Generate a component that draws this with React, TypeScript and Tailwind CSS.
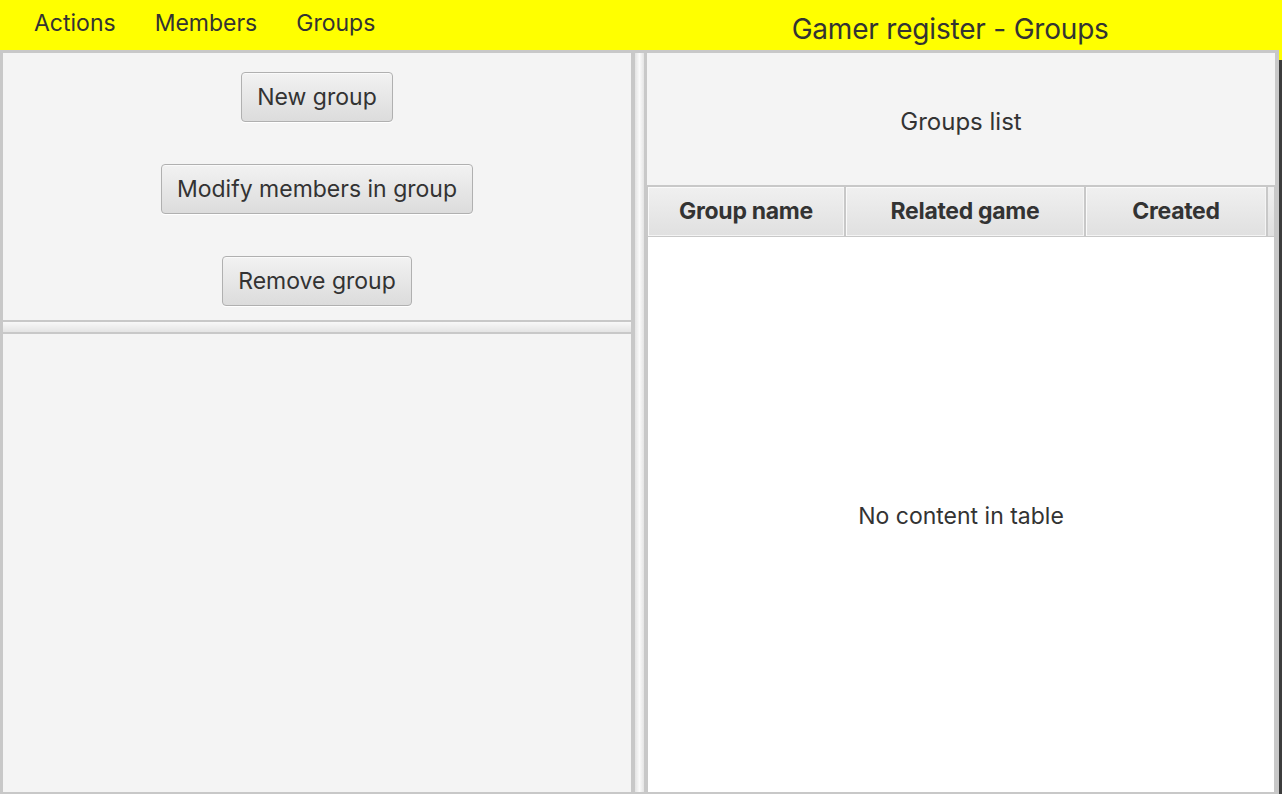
import React from "react";

function Btn({ label }: { label: string }) {
  return (
    <button className="h-[50px] px-[15px] rounded-[4px] border border-[#b0b0b0] bg-gradient-to-b from-[#f2f2f2] to-[#dcdcdc] shadow-[inset_0_1px_0_#fafafa,0_1px_0_#ffffff] text-[23px] text-[#333333] leading-none">
      {label}
    </button>
  );
}

function HeadCell({ label, w }: { label: string; w: string }) {
  return (
    <div className={`${w} h-full flex items-center justify-center border-r-2 border-[#c8c8c8] bg-gradient-to-b from-[#f0f0f0] to-[#e0e0e0] shadow-[inset_1px_1px_0_#fafafa,inset_-1px_-1px_0_#f4f4f4] text-[23px] font-bold text-[#333333] tracking-[-0.3px]`}>
      {label}
    </div>
  );
}

export default function App() {
  return (
    <div
      className="w-[1282px] h-[794px] flex overflow-hidden bg-[#f4f4f4] text-[#333333]"
      style={{ fontFamily: "Inter, 'Noto Sans', sans-serif" }}
    >
      <div className="w-[1279px] flex flex-col">
        <header className="h-[50px] bg-[#ffff00] flex items-center">
          <nav className="flex items-center pl-[34px] gap-[39px] text-[23px] -mt-[4px]">
            <span>Actions</span>
            <span>Members</span>
            <span>Groups</span>
          </nav>
          <div className="flex-1 flex justify-center pl-[246px] text-[28px] mt-[8px] tracking-[-0.2px]">
            Gamer register - Groups
          </div>
        </header>
        <div className="flex-1 flex bg-[#c8c8c8] pt-[3px] pb-[2px] pl-[3px] pr-[4px]">
          {/* left pane */}
          <div className="w-[628px] flex flex-col">
            <div className="h-[267px] bg-[#f4f4f4] flex flex-col items-center pt-[19px] gap-[42px]">
              <Btn label="New group" />
              <Btn label="Modify members in group" />
              <Btn label="Remove group" />
            </div>
            <div className="h-[14px] border-y-2 border-[#c8c8c8] bg-gradient-to-b from-[#f8f8f8] to-[#e4e4e4]" />
            <div className="flex-1 bg-[#f4f4f4]" />
          </div>
          {/* divider */}
          <div className="w-[16px] flex">
            <div className="w-[4px] bg-[#c8c8c8]" />
            <div className="w-[9px] bg-gradient-to-r from-[#e4e4e4] via-[#fafafa] to-[#e4e4e4]" />
            <div className="w-[3px] bg-[#c8c8c8]" />
          </div>
          {/* right pane */}
          <div className="w-[628px] flex flex-col">
            <div className="h-[132px] bg-[#f4f4f4] flex items-center justify-center text-[24px] pt-[6px]">
              Groups list
            </div>
            <div className="flex-1 flex flex-col bg-[#c8c8c8] pt-[2px] px-[1px]">
              <div className="h-[50px] flex border-b border-[#c8c8c8]">
                <HeadCell label="Group name" w="w-[198px]" />
                <HeadCell label="Related game" w="w-[240px]" />
                <HeadCell label="Created" w="w-[182px]" />
                <div className="flex-1 bg-gradient-to-b from-[#f0f0f0] to-[#e0e0e0]" />
              </div>
              <div className="flex-1 bg-white flex items-center justify-center text-[23px] pt-[4px]">
                No content in table
              </div>
            </div>
          </div>
        </div>
      </div>
      <div className="w-[3px] flex flex-col">
        <div className="h-[60px] bg-[#ffff00]" />
        <div className="flex-1 bg-[#3c3c3c]" />
      </div>
    </div>
  );
}
